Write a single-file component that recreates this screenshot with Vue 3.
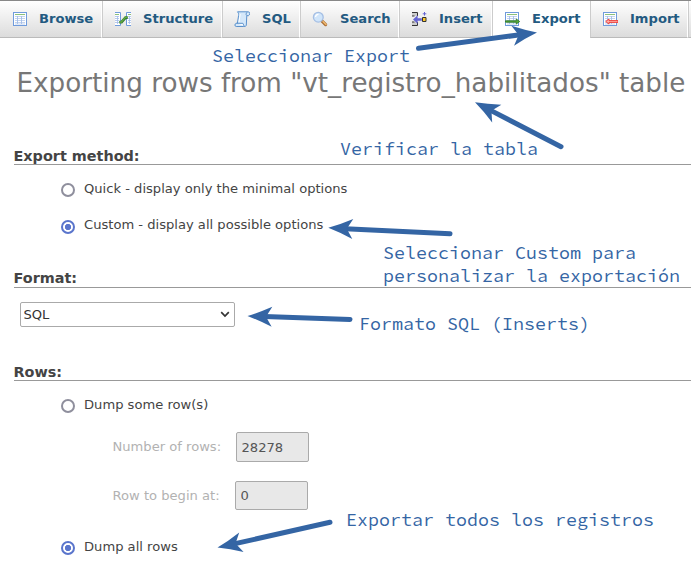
<script setup>
import { ref } from 'vue'

const tabs = [
  { name: 'Browse', size: 'w-browse' },
  { name: 'Structure', size: 'w-structure' },
  { name: 'SQL', size: 'w-sql' },
  { name: 'Search', size: 'w-search' },
  { name: 'Insert', size: 'w-insert' },
  { name: 'Export', size: 'w-export' },
  { name: 'Import', size: 'w-import' },
]
const method = ref('custom')
const dump = ref('all')
const format = ref('SQL')
const rowCount = ref('28278')
const rowStart = ref('0')

const arrows = [
  { tail: [418.5, 48.3], tip: [537, 32.5] },
  { tail: [561, 146.7], tip: [475, 102.3] },
  { tail: [450, 233.8], tip: [328.3, 227.8] },
  { tail: [350, 319.5], tip: [247.5, 316] },
  { tail: [330, 522.3], tip: [217.5, 547.6] },
].map(({ tail, tip }) => {
  const dx = tip[0] - tail[0]
  const dy = tip[1] - tail[1]
  return {
    length: Math.hypot(dx, dy),
    transform: `translate(${tip[0]} ${tip[1]}) rotate(${(Math.atan2(dy, dx) * 180) / Math.PI})`,
  }
})
</script>

<template>
  <div class="page">
    <nav class="tabs">
      <a v-for="t in tabs" :key="t.name" class="tab" :class="[t.size, { active: t.name === 'Export' }]">
        <svg class="icon" width="16" height="16" viewBox="0 0 16 16">
          <g v-if="t.name === 'Browse' || t.name === 'Export' || t.name === 'Import'">
            <rect x="1.5" y="1.5" width="13" height="13" fill="#fff" stroke="#6f9bdc" />
            <path d="M3 3.5h10" stroke="#8cc07a" />
            <path d="M3 5.5h10M3 7.5h10M3 9.5h10M3 11.5h10M3 13h10" stroke="#b5c9ea" stroke-width=".8" />
            <path d="M5.5 5v8M9.5 5v8" stroke="#a3bde8" stroke-width=".9" />
            <path v-if="t.name === 'Export'" d="M1.5 9.8h10.8V8l3.4 2.5-3.4 2.5v-1.8H1.5z" fill="#58aa3c" stroke="#2c7522" stroke-width=".8" />
            <path v-if="t.name === 'Import'" d="M3.7 10.5L7 8v1.6h9v1.8H7V13z" fill="#ffb0a8" stroke="#f0342e" stroke-width=".9" />
          </g>
          <g v-else-if="t.name === 'Structure'">
            <path d="M0 1.5h5.5v13H0M16 1.5h-4.5v13H16" fill="#fff" stroke="#6f9bdc" />
            <path d="M0 3.5h4M13 3.5h3" stroke="#8cc07a" />
            <path d="M0 5.5h4M0 7.5h4M0 9.5h4M0 11.5h4M13 5.5h3M13 7.5h3M13 9.5h3M13 11.5h3M2.5 5v8M14.5 5v8" stroke="#a3bde8" stroke-width=".8" />
            <path d="M4.3 11.2h2.2l4-4.6h2.3" fill="none" stroke="#367b2c" stroke-width="2.8" />
            <path d="M4.6 11h1.7l4-4.6h2.2" fill="none" stroke="#60aa47" stroke-width="1.3" />
          </g>
          <g v-else-if="t.name === 'SQL'" stroke="#5b91cc" stroke-linejoin="round">
            <path d="M3.5 .8h10.7c2 0 2 3.2.2 3.9h-1.6L12.3 14c-.3 1.4-1 1.6-2.5 1.5H2.2c-1.8 0-1.6-2.9 0-3.2h1.2l1.2-7.8C4.9 3.2 4.5 2 3.5.8z" fill="#d5e8fa" />
            <path d="M12.8 4.7c-1-.6-1-2.5.4-3.6M2.5 12.3h6.4c.8.8.3 2.6 1.8 3" fill="#fff" />
            <path d="M6.2 3L5 11" stroke="#fff" />
          </g>
          <g v-else-if="t.name === 'Search'">
            <path d="M9.8 9.8l3.8 3.8" stroke="#a96d35" stroke-width="3.2" stroke-linecap="round" />
            <path d="M11 10.5l3 3" stroke="#f1ba70" stroke-width="1.5" stroke-linecap="round" />
            <circle cx="6.3" cy="6.2" r="4.9" fill="#d0e5fa" stroke="#a5bfe4" stroke-width="1.3" />
            <path d="M3.5 6a3 3 0 013-2.6" fill="none" stroke="#fff" stroke-width="1.3" />
          </g>
          <g v-else>
            <path d="M1 1.5h5v3.5H1zM1 11h5v3.5H1z" fill="#ccc" />
            <path d="M1 1.5h5.5v3.5M1 5h2.5M1 11h2.5M6.5 11v3.5H1" fill="none" stroke="#333" />
            <path d="M11.5 6.5h3.5v4h-3.5z" fill="#ffc928" stroke="#333" />
            <path d="M2 8.5L6.6 4.3v2.9h4.2v2.6H6.6v2.9z" fill="#6464d2" />
            <path d="M13.5 1v3.6M11.7 2.8h3.6" stroke="#6464d2" />
          </g>
        </svg>
        <span>{{ t.name }}</span>
      </a>
      <span class="rest"></span>
    </nav>

    <h1>Exporting rows from "vt_registro_habilitados" table</h1>

    <section class="method">
      <h2>Export method:</h2>
      <label class="choice"><input v-model="method" type="radio" value="quick" /><span>Quick - display only the minimal options</span></label>
      <label class="choice second"><input v-model="method" type="radio" value="custom" /><span>Custom - display all possible options</span></label>
    </section>

    <section class="format">
      <h2>Format:</h2>
      <div class="picker">
        <select v-model="format"><option>SQL</option></select>
        <svg width="10" height="7" viewBox="0 0 10 7"><path d="M1.2 1.2L5 5l3.8-3.8" fill="none" stroke="#333" stroke-width="1.7" /></svg>
      </div>
    </section>

    <section class="rows">
      <h2>Rows:</h2>
      <label class="choice"><input v-model="dump" type="radio" value="some" /><span>Dump some row(s)</span></label>
      <div class="field"><span>Number of rows:</span><input v-model="rowCount" disabled /></div>
      <div class="field start"><span>Row to begin at:</span><input v-model="rowStart" disabled /></div>
      <label class="choice last"><input v-model="dump" type="radio" value="all" /><span>Dump all rows</span></label>
    </section>

    <svg class="arrows" width="691" height="566">
      <g v-for="(a, i) in arrows" :key="i" :transform="a.transform">
        <path :d="`M${-a.length} 0H-17`" stroke="#3465a4" stroke-width="5" stroke-linecap="round" />
        <path d="M0 0Q-12 -4 -24.5 -10L-18.5 0L-24.5 10Q-12 4 0 0z" fill="#3465a4" />
      </g>
    </svg>
    <p class="note n-export">Seleccionar Export</p>
    <p class="note n-table">Verificar la tabla</p>
    <p class="note n-custom">Seleccionar Custom para<br />personalizar la exportación</p>
    <p class="note n-format">Formato SQL (Inserts)</p>
    <p class="note n-all">Exportar todos los registros</p>
  </div>
</template>

<style>
body { margin: 0; background: #fff; }
</style>

<style scoped>
.page { position: relative; width: 691px; height: 566px; overflow: hidden; background: #fff; color: #444; font: 13.1px/16px "DejaVu Sans", sans-serif; }
.tabs { display: flex; box-sizing: border-box; height: 38px; border-top: 1px solid #888; }
.tab { display: flex; align-items: center; box-sizing: border-box; flex: none; height: 37px; padding-left: 11px; gap: 12px; border-left: 1px solid #ccc; border-right: 1px solid #fff; border-bottom: 1px solid #bbb; background: linear-gradient(#fff, #dcdcdc); color: #235a81; font-weight: bold; }
.tab span { line-height: 16px; padding-bottom: 1px; }
.icon { flex: none; margin-bottom: 1px; }
.active { background: #fff; border-bottom-color: #fff; }
.w-browse { width: 102px; border-left: 0; padding-left: 12px; gap: 11px; }
.w-structure { width: 120px; padding-left: 12px; }
.w-sql { width: 78px; }
.w-search { width: 99px; }
.w-insert { width: 93px; }
.w-export { width: 98px; }
.w-import { width: 98px; }
.rest { flex: 1; border-left: 1px solid #ccc; border-bottom: 1px solid #bbb; background: linear-gradient(#fff, #dcdcdc); }
h1 { margin: 0; padding: 28px 0 0 16.5px; height: 74px; font-size: 26.22px; line-height: 34px; font-weight: normal; color: #777; white-space: nowrap; box-sizing: border-box; }
section { padding-left: 14px; }
h2 { box-sizing: border-box; margin: 0; height: 18px; border-bottom: 1px solid #999; font-size: 14.4px; line-height: 17px; font-weight: bold; color: #444; text-indent: -.5px; }
.method h2, .rows h2 { line-height: 19px; }
.method { padding-top: 35px; height: 123px; box-sizing: border-box; }
.choice { display: flex; align-items: flex-start; gap: 9px; margin: 16px 0 0 47px; height: 20px; }
.choice input { appearance: none; box-sizing: border-box; flex: none; width: 14px; height: 14px; margin: 2px 0 0; border: 2px solid #8f8f9d; border-radius: 50%; background: #fff; }
.choice.second input { margin-top: 3px; }
.choice input:checked { border-color: #5a75cc; background: radial-gradient(circle, #5a75cc 2.8px, #fff 3.5px); }
.format { padding-top: 35px; height: 93px; box-sizing: border-box; }
.picker { position: relative; width: 215px; margin: 14px 0 0 6px; }
select { appearance: none; display: block; box-sizing: border-box; width: 215px; height: 25px; padding: 0 2.5px; border: 1px solid #aaa; border-radius: 2px; background: #fff; color: #333; font: 13.1px "DejaVu Sans", sans-serif; }
.picker svg { position: absolute; right: 5px; top: 9px; }
.rows { padding-top: 35px; }
.field { display: flex; align-items: center; height: 30px; margin: 15px 0 0 98.5px; color: #b2b2b2; }
.field span { width: 123.5px; }
.field input { box-sizing: border-box; width: 73px; height: 30px; margin: 0; padding: 0 4.5px; border: 1px solid #aaa; border-radius: 2px; background: #e8e8e8; color: #555; font: 13.1px "DejaVu Sans", sans-serif; }
.field.start { height: 29px; margin-top: 19px; }
.field.start span { width: 122.5px; }
.field.start input { height: 29px; }
.choice.last { margin-top: 29px; }
.arrows { position: absolute; left: 0; top: 0; pointer-events: none; }
.note { position: absolute; margin: 0; font: 18.33px/23px "Source Code Pro", "Noto Sans Mono CJK SC", "Liberation Mono", monospace; color: #3465a4; white-space: nowrap; }
.n-export { left: 212px; top: 44px; }
.n-table { left: 340px; top: 137px; }
.n-custom { left: 383px; top: 241px; }
.n-format { left: 359px; top: 312px; }
.n-all { left: 346px; top: 508px; }
</style>
